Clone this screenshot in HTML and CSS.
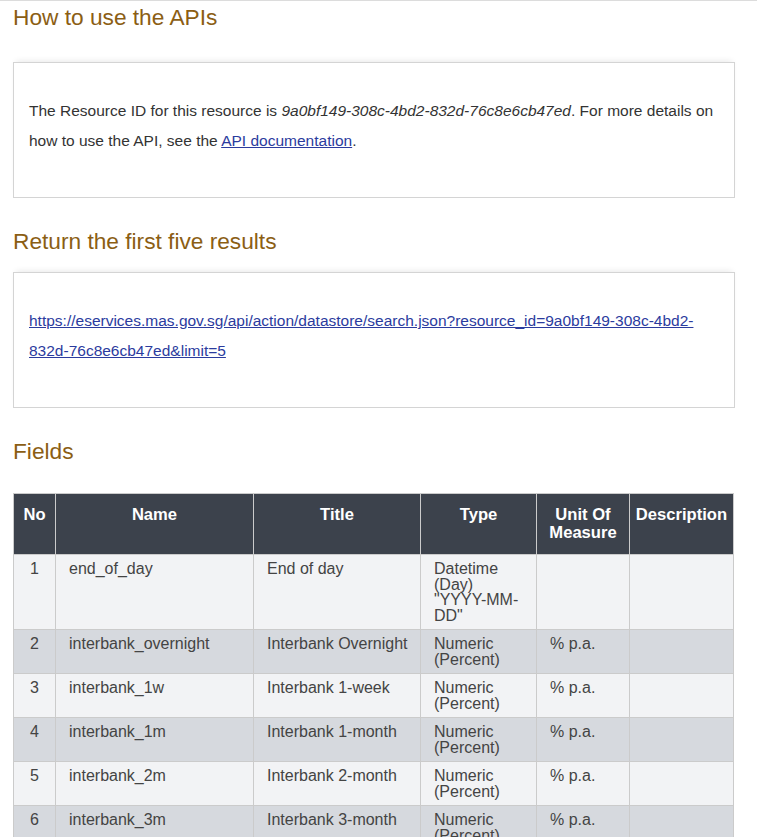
FILE: index.html
```html
<!DOCTYPE html>
<html lang="en">
<head>
  <meta charset="UTF-8">
  <meta name="viewport" content="width=device-width, initial-scale=1.0">
  <title>How to use the APIs</title>
  <link rel="stylesheet" href="styles.css">
</head>
<body>
  <div class="page">
    <h2 class="section-title first">How to use the APIs</h2>
    <div class="api-box">
      <p>The Resource ID for this resource is <em>9a0bf149-308c-4bd2-832d-76c8e6cb47ed</em>. For more details on how to use the API, see the <a href="#api-doc">API documentation</a>.</p>
    </div>

    <h2 class="section-title second">Return the first five results</h2>
    <div class="api-box">
      <p><a href="#sample">https://eservices.mas.gov.sg/api/action/datastore/search.json?resource_id=9a0bf149-308c-4bd2-832d-76c8e6cb47ed&amp;limit=5</a></p>
    </div>

    <h2 class="section-title third">Fields</h2>
    <table class="fields">
      <thead>
        <tr>
          <th class="col-no">No</th>
          <th class="col-name">Name</th>
          <th class="col-title">Title</th>
          <th class="col-type">Type</th>
          <th class="col-unit">Unit Of Measure</th>
          <th class="col-desc">Description</th>
        </tr>
      </thead>
      <tbody>
        <tr>
          <td class="num">1</td>
          <td>end_of_day</td>
          <td>End of day</td>
          <td>Datetime (Day) "YYYY-MM-DD"</td>
          <td></td>
          <td></td>
        </tr>
        <tr>
          <td class="num">2</td>
          <td>interbank_overnight</td>
          <td>Interbank Overnight</td>
          <td>Numeric (Percent)</td>
          <td>% p.a.</td>
          <td></td>
        </tr>
        <tr>
          <td class="num">3</td>
          <td>interbank_1w</td>
          <td>Interbank 1-week</td>
          <td>Numeric (Percent)</td>
          <td>% p.a.</td>
          <td></td>
        </tr>
        <tr>
          <td class="num">4</td>
          <td>interbank_1m</td>
          <td>Interbank 1-month</td>
          <td>Numeric (Percent)</td>
          <td>% p.a.</td>
          <td></td>
        </tr>
        <tr>
          <td class="num">5</td>
          <td>interbank_2m</td>
          <td>Interbank 2-month</td>
          <td>Numeric (Percent)</td>
          <td>% p.a.</td>
          <td></td>
        </tr>
        <tr>
          <td class="num">6</td>
          <td>interbank_3m</td>
          <td>Interbank 3-month</td>
          <td>Numeric (Percent)</td>
          <td>% p.a.</td>
          <td></td>
        </tr>
        <tr>
          <td class="num">7</td>
          <td>interbank_6m</td>
          <td>Interbank 6-month</td>
          <td>Numeric (Percent)</td>
          <td>% p.a.</td>
          <td></td>
        </tr>
      </tbody>
    </table>
  </div>
</body>
</html>
```

FILE: styles.css
```css
body { margin: 0; font-family: "Liberation Sans", Arial, sans-serif; color: #333; background: #fff; }
.page { border-top: 1px solid #dcdcdc; padding: 0 22px 40px 13px; }

.section-title { font-size: 22.7px; line-height: 26px; font-weight: normal; color: #8b5e14; margin: 30px 0 29px; }
.section-title.first { margin: 3px 0 32px; }
.section-title.second { margin: 30px 0 18px; }

.api-box { border: 1px solid #d4d4d4; padding: 33px 10px 41px 15px; box-shadow: 0 -4px 6px -3px rgba(0, 0, 0, 0.09); }
.api-box p { margin: 0; font-size: 15.5px; line-height: 30px; }
.api-box a { color: #2b3b9e; }

.fields { width: 720px; border-collapse: collapse; table-layout: fixed; font-size: 16px; }
.fields th, .fields td { border: 1px solid #cbcbcb; box-sizing: border-box; }
.fields th { background: #3c424c; color: #fff; font-size: 16.6px; font-weight: bold; line-height: 18px; padding: 12px 3px; text-align: center; vertical-align: top; }
.fields td { color: #444; line-height: 15.5px; padding: 6px 10px 6px 13px; vertical-align: top; text-align: left; }
.fields td.num { text-align: center; padding: 6px 4px; }
.fields tbody tr:nth-child(odd) td { background: #f2f3f5; }
.fields tbody tr:nth-child(even) td { background: #d6d9de; }

.col-no { width: 42px; }
.col-name { width: 198px; }
.col-title { width: 167px; }
.col-type { width: 116px; }
.col-unit { width: 93px; }
.col-desc { width: 104px; }
```
